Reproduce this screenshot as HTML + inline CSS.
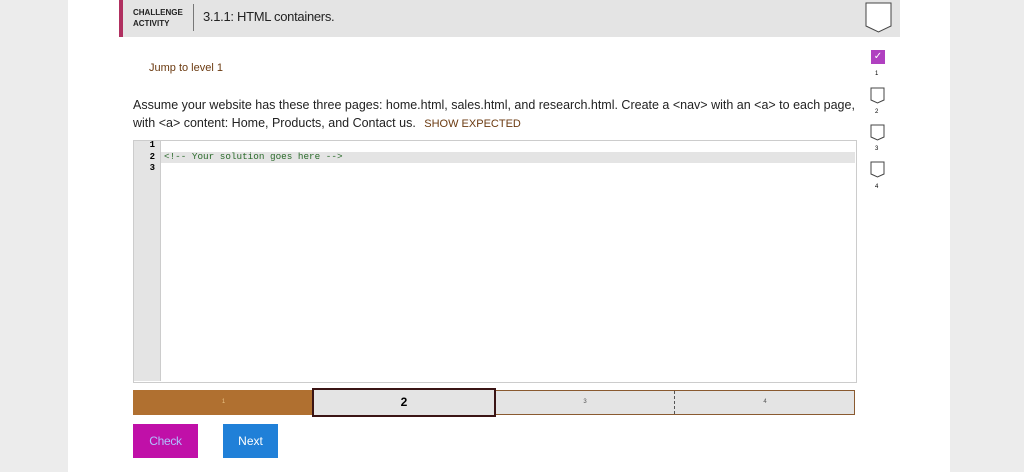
<!DOCTYPE html><html><head><style>
body{margin:0;width:1024px;height:472px;background:#ececec;font-family:"Liberation Sans",sans-serif;position:relative;overflow:hidden}
.a{position:absolute}
</style></head><body>
<div class="a" style="left:68px;top:0;width:882px;height:472px;background:#fff"></div>
<div class="a" style="left:119px;top:0;width:781px;height:37px;background:#e4e4e4;border-left:4px solid #b03060;box-sizing:border-box"></div>
<div class="a" style="left:133px;top:7px;font-size:8px;font-weight:bold;line-height:11px;color:#222">CHALLENGE<br>ACTIVITY</div>
<div class="a" style="left:193px;top:4px;width:1px;height:27px;background:#777"></div>
<div class="a" style="left:203px;top:9px;font-size:13px;color:#222;letter-spacing:-0.3px">3.1.1: HTML containers.</div>
<svg class="a" style="left:865px;top:2px" width="28" height="32"><path d="M1 1H26V24L13.5 30L1 24Z" fill="#fff" stroke="#444" stroke-width="1"/></svg>
<div class="a" style="left:149px;top:62px;font-size:11px;color:#6b3a10">Jump to level 1</div>
<div class="a" style="left:133px;top:96px;font-size:12.5px;line-height:18px;color:#222;width:725px">Assume your website has these three pages: home.html, sales.html, and research.html. Create a &lt;nav&gt; with an &lt;a&gt; to each page, with &lt;a&gt; content: Home, Products, and Contact us. <span style="font-size:11px;color:#6b3a10;margin-left:5px">SHOW EXPECTED</span></div>
<div class="a" style="left:871px;top:50px;width:14px;height:14px;background:#b040c0;color:#fff;font-size:10px;text-align:center;line-height:14px">✓</div>
<div class="a" style="left:875px;top:71px;font-size:6px">1</div>
<svg class="a" style="left:870px;top:87px" width="16" height="18"><path d="M1 1H14V13L7.5 16L1 13Z" fill="#fff" stroke="#444"/></svg>
<div class="a" style="left:875px;top:109px;font-size:6px">2</div>
<svg class="a" style="left:870px;top:124px" width="16" height="18"><path d="M1 1H14V13L7.5 16L1 13Z" fill="#fff" stroke="#444"/></svg>
<div class="a" style="left:875px;top:146px;font-size:6px">3</div>
<svg class="a" style="left:870px;top:161px" width="16" height="18"><path d="M1 1H14V13L7.5 16L1 13Z" fill="#fff" stroke="#444"/></svg>
<div class="a" style="left:875px;top:184px;font-size:6px">4</div>
<div class="a" style="left:133px;top:140px;width:722px;height:241px;border:1px solid #ccc;background:#fff"></div>
<div class="a" style="left:134px;top:141px;width:26px;height:240px;background:#e4e4e4;border-right:1px solid #ccc"></div>
<div class="a" style="left:161px;top:152px;width:694px;height:11px;background:#e4e4e4"></div>
<div class="a" style="left:140px;top:140px;font-family:'Liberation Mono',monospace;font-size:9px;line-height:11.5px;font-weight:bold;text-align:right;width:15px">1<br>2<br>3</div>
<div class="a" style="left:164px;top:151px;font-family:'Liberation Mono',monospace;font-size:9.3px;line-height:12px;color:#2a6a2a">&lt;!-- Your solution goes here --&gt;</div>
<div class="a" style="left:133px;top:390px;width:722px;height:25px;border:1px solid #8a5a30;box-sizing:border-box;background:#e4e4e4"></div>
<div class="a" style="left:133px;top:390px;width:181px;height:25px;background:#b07030;color:#e8c080;font-size:6px;text-align:center;line-height:25px">1</div>
<div class="a" style="left:312px;top:388px;width:184px;height:29px;border:2px solid #3a1414;box-sizing:border-box;background:#e4e4e4;text-align:center;line-height:25px;font-size:12px;font-weight:bold">2</div>
<div class="a" style="left:496px;top:390px;width:178px;height:25px;text-align:center;line-height:25px;font-size:6px;color:#555">3</div>
<div class="a" style="left:674px;top:391px;height:23px;border-left:1px dashed #555"></div>
<div class="a" style="left:675px;top:390px;width:180px;height:25px;text-align:center;line-height:25px;font-size:6px;color:#555">4</div>
<div class="a" style="left:133px;top:424px;width:65px;height:34px;background:#c010a8;color:#b0c0ff;font-size:12px;text-align:center;line-height:34px;letter-spacing:-0.3px">Check</div>
<div class="a" style="left:223px;top:424px;width:55px;height:34px;background:#2080d8;color:#fff;font-size:12px;text-align:center;line-height:34px">Next</div>
</body></html>
